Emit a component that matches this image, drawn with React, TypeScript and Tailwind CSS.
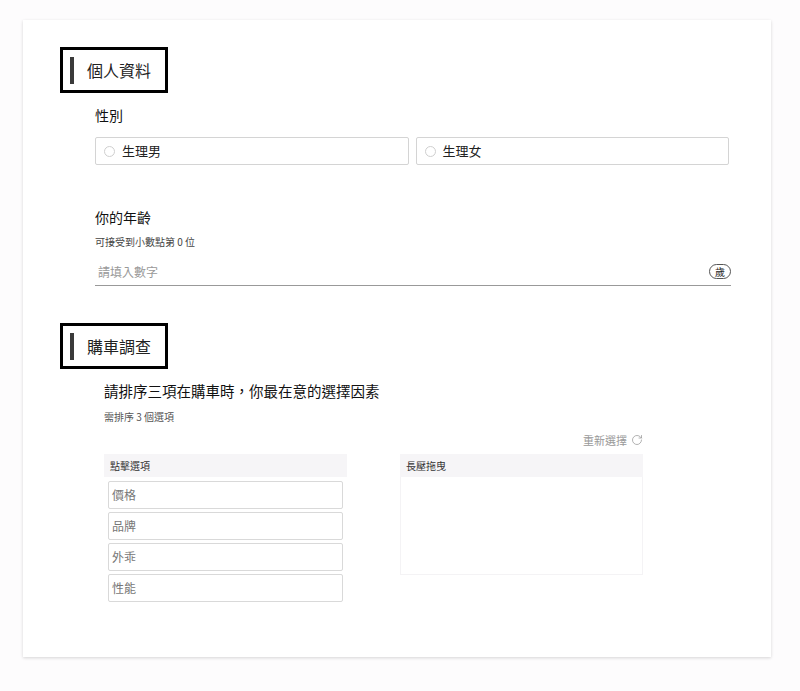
import React from 'react';
import { RotateCw } from 'lucide-react';

const FONT = { fontFamily: '"Noto Sans CJK TC", "Noto Sans", sans-serif' };

const SectionTitle: React.FC<{ title: string }> = ({ title }) => (
  <div className="w-[108px] h-[46px] border-[3px] border-black flex items-center">
    <div className="ml-[7px] w-[4px] h-[27px] bg-[#3a3a3a]" />
    <span className="ml-[13px] text-[16px] leading-none text-[#222]">{title}</span>
  </div>
);

const Radio: React.FC<{ label: string }> = ({ label }) => (
  <div className="h-[28px] border border-[#d4d4d4] rounded-[2px] flex items-center pl-[8px]">
    <span className="w-[11px] h-[11px] rounded-full border border-[#cfcfcf]" />
    <span className="ml-[7px] text-[13px] text-[#222]">{label}</span>
  </div>
);

const OPTIONS = ['價格', '品牌', '外乖', '性能'];

const App: React.FC = () => {
  return (
    <div className="min-h-screen bg-[#fdfcfd] pt-[20px] pl-[23px]" style={FONT}>
      <div className="w-[748px] h-[637px] bg-white shadow-[0_1px_3px_rgba(0,0,0,0.16)] pl-[37px] pt-[27px]">
        <SectionTitle title="個人資料" />

        <div className="ml-[35px] w-[636px]">
          <div className="mt-[12px] text-[14px] leading-[20px] text-[#111]">性別</div>
          <div className="mt-[12px] grid grid-cols-2 gap-[7px] w-[634px]">
            <Radio label="生理男" />
            <Radio label="生理女" />
          </div>

          <div className="mt-[42px] text-[14px] leading-[20px] text-[#111]">你的年齡</div>
          <div className="mt-[8px] text-[10px] leading-[14px] text-[#444]">可接受到小數點第 0 位</div>
          <div className="mt-[11px] h-[26px] border-b border-[#999] flex items-center justify-between pl-[3px] pb-[1px]">
            <span className="text-[12px] text-[#999]">請填入數字</span>
            <span className="h-[15px] px-[5px] rounded-full border border-[#555] text-[10px] leading-[13px] text-[#222] -mt-[1px]">歲</span>
          </div>
        </div>

        <div className="mt-[37px]">
          <SectionTitle title="購車調查" />
        </div>

        <div className="ml-[44px] w-[539px]">
          <div className="mt-[11px] text-[14.5px] leading-[22px] text-[#111]">請排序三項在購車時，你最在意的選擇因素</div>
          <div className="mt-[8px] text-[10px] leading-[14px] text-[#555]">需排序 3 個選項</div>
          <div className="mt-[8px] h-[16px] flex items-center justify-end gap-[4px] text-[11px] text-[#999]">
            <span>重新選擇</span>
            <RotateCw size={12} strokeWidth={1.5} />
          </div>

          <div className="mt-[6px] flex justify-between">
            <div className="w-[243px]">
              <div className="h-[23px] bg-[#f6f5f7] flex items-center pl-[6px] text-[10px] text-[#333]">點擊選項</div>
              <div className="px-[4px] pt-[4px] flex flex-col gap-[3px]">
                {OPTIONS.map((o) => (
                  <div
                    key={o}
                    className="h-[28px] border border-[#d9d9d9] rounded-[2px] flex items-center pl-[3px] text-[12px] text-[#777]"
                  >
                    {o}
                  </div>
                ))}
              </div>
            </div>

            <div className="w-[243px]">
              <div className="h-[23px] bg-[#f6f5f7] flex items-center pl-[6px] text-[10px] text-[#333]">長壓拖曳</div>
              <div className="h-[98px] border border-t-0 border-[#f4f3f5]" />
            </div>
          </div>
        </div>
      </div>
    </div>
  );
};

export default App;
